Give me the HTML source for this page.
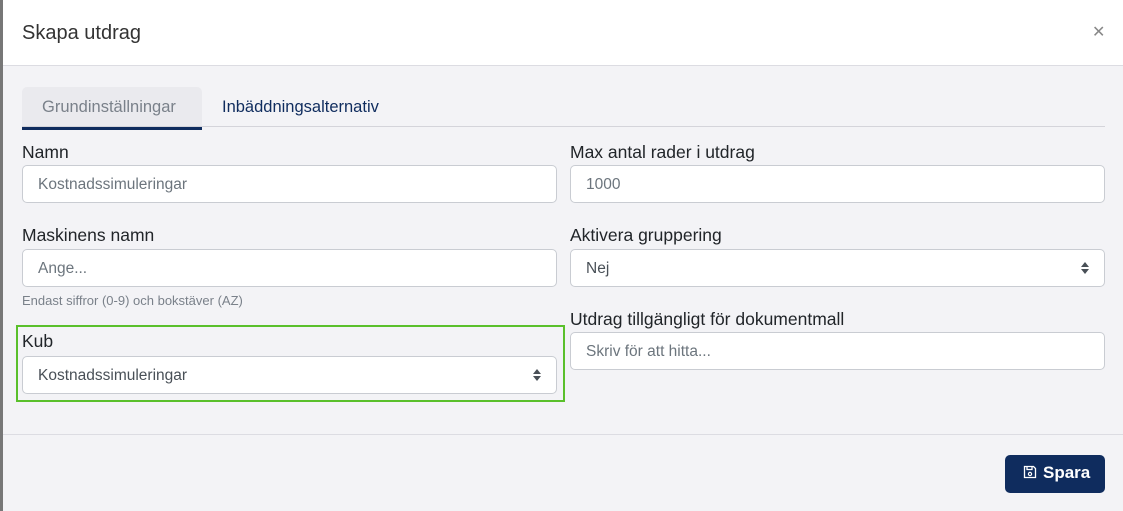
<!DOCTYPE html>
<html><head><meta charset="utf-8"><style>
*{box-sizing:border-box;margin:0;padding:0}
body{width:1123px;height:511px;overflow:hidden;background:#f3f3f6;font-family:"Liberation Sans",sans-serif;position:relative}
.a{position:absolute}
.strip{left:0;top:0;width:3px;height:511px;background:#777}
.hdr{left:3px;top:0;width:1120px;height:66px;background:#fff;border-bottom:1px solid #dcdce2}
.title{left:22px;top:22px;font-size:20px;color:#333}
.x{left:1092px;top:22px;font-size:16px;color:#888}
.lab{font-size:17.5px;color:#212529}
.in{height:38px;background:#fff;border:1px solid #c9ccd2;border-radius:5px;font-size:15.5px;color:#6c757d;padding:10px 15px 0}
.car{position:absolute;right:14px;top:11px;width:10px}
.help{font-size:13px;color:#7a818a}
.btn{left:1005px;top:455px;width:100px;height:38px;background:#0f2c5e;border-radius:5px;color:#fff;font-size:17px;font-weight:bold;padding:8px 0 0 18px}
</style></head><body>
<div class="a strip"></div>
<div class="a hdr"></div>
<div class="a title">Skapa utdrag</div>
<div class="a x">✕</div>
<div class="a" style="left:22px;top:87px;width:180px;height:41px;background:#eaeaee;border-radius:5px 5px 0 0"></div>
<div class="a" style="left:22px;top:126px;width:1083px;height:1px;background:#d4d4da"></div>
<div class="a" style="left:22px;top:127px;width:180px;height:3px;background:#0f2c5e"></div>
<div class="a" style="left:42px;top:98px;font-size:16.5px;color:#7a818a">Grundinställningar</div>
<div class="a" style="left:222px;top:98px;font-size:16.5px;color:#0f2c5e">Inbäddningsalternativ</div>

<div class="a lab" style="left:22px;top:142px">Namn</div>
<div class="a in" style="left:22px;top:165px;width:535px">Kostnadssimuleringar</div>
<div class="a lab" style="left:570px;top:142px">Max antal rader i utdrag</div>
<div class="a in" style="left:570px;top:165px;width:535px">1000</div>

<div class="a lab" style="left:22px;top:225px">Maskinens namn</div>
<div class="a in" style="left:22px;top:249px;width:535px">Ange...</div>
<div class="a help" style="left:22px;top:293px">Endast siffror (0-9) och bokstäver (AZ)</div>
<div class="a lab" style="left:570px;top:225px">Aktivera gruppering</div>
<div class="a in" style="left:570px;top:249px;width:535px;color:#495057">Nej<svg class="car" viewBox="0 0 10 14"><path d="M1 6L5 1L9 6Z M1 8L5 13L9 8Z" fill="#495057"/></svg></div>

<div class="a" style="left:16px;top:325px;width:549px;height:77px;border:2px solid #5ac02b"></div>
<div class="a lab" style="left:22px;top:331px">Kub</div>
<div class="a in" style="left:22px;top:356px;width:535px;color:#495057">Kostnadssimuleringar<svg class="car" viewBox="0 0 10 14"><path d="M1 6L5 1L9 6Z M1 8L5 13L9 8Z" fill="#495057"/></svg></div>
<div class="a lab" style="left:570px;top:309px">Utdrag tillgängligt för dokumentmall</div>
<div class="a in" style="left:570px;top:332px;width:535px">Skriv för att hitta...</div>

<div class="a" style="left:3px;top:434px;width:1120px;height:1px;background:#dcdce2"></div>
<div class="a btn"><svg width="14" height="14" viewBox="0 0 14 14" style="vertical-align:-1px;margin-right:6px"><path d="M1.5 1.5H10.5L12.5 3.5V12.5H1.5Z M4 1.5V4.5H9V1.5" fill="none" stroke="#fff" stroke-width="1.3"/><circle cx="7" cy="9" r="1.6" fill="none" stroke="#fff" stroke-width="1.2"/></svg>Spara</div>
</body></html>
